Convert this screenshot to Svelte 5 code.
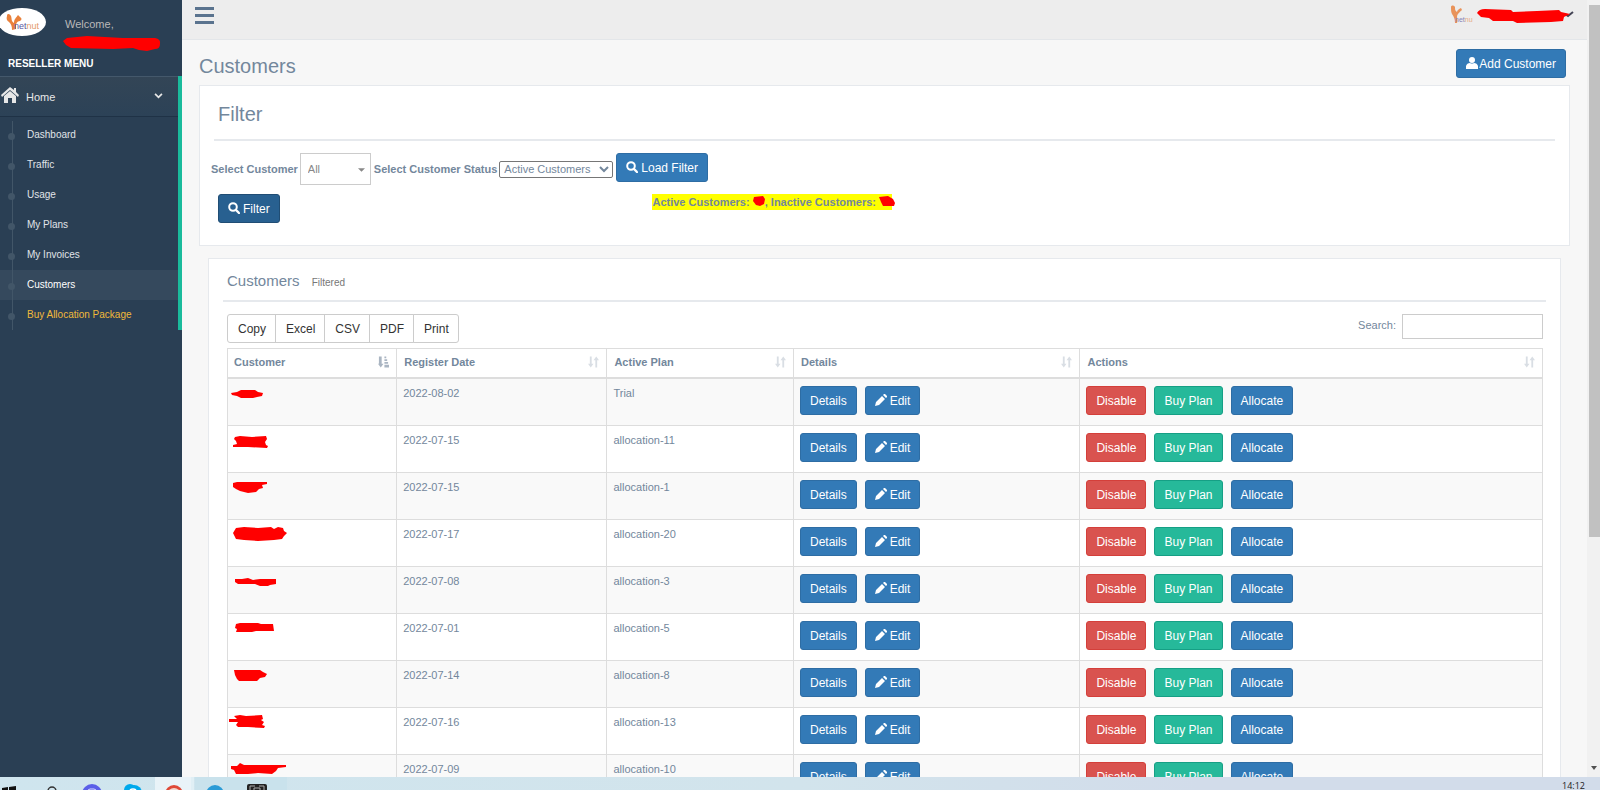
<script lang="ts">
	const menu = [
		{ label: 'Dashboard' },
		{ label: 'Traffic' },
		{ label: 'Usage' },
		{ label: 'My Plans' },
		{ label: 'My Invoices' },
		{ label: 'Customers', current: true },
		{ label: 'Buy Allocation Package', highlight: true }
	];

	const exports = ['Copy', 'Excel', 'CSV', 'PDF', 'Print'];
	const columns = ['Customer', 'Register Date', 'Active Plan', 'Details', 'Actions'];

	// mask = scribble drawn over the customer name
	const rows = [
		{ date: '2022-08-02', plan: 'Trial', mask: 'M3 14 9 13 13 11 27 11 30 13 35 14 34 17 29 18 25 19 13 19 9 17 4 16Z' },
		{ date: '2022-07-15', plan: 'allocation-11', mask: 'M7 11 12 10 24 11 38 10 39 13 37 16 38 19 40 20 39 22 20 21 5 21 5 19 9 18 8 15 6 13Z' },
		{ date: '2022-07-15', plan: 'allocation-1', mask: 'M5 10 9 9 39 9 39 11 34 12 35 15 31 16 28 19 20 20 12 18 8 16 5 14Z' },
		{ date: '2022-07-17', plan: 'allocation-20', mask: 'M5 13 8 8 16 7 30 8 43 7 46 9 50 7 55 8 56 11 59 13 56 16 54 19 46 20 30 21 16 20 8 19Z' },
		{ date: '2022-07-08', plan: 'allocation-3', mask: 'M7 12 14 12 20 11 25 13 32 12 48 12 48 17 42 18 40 19 32 19 27 17 10 17 7 15Z' },
		{ date: '2022-07-01', plan: 'allocation-5', mask: 'M8 10 12 9 30 9 33 10 45 10 46 17 28 17 24 18 8 18 9 15 7 14Z' },
		{ date: '2022-07-14', plan: 'allocation-8', mask: 'M6 9 32 9 35 11 39 13 37 16 32 17 29 20 11 20 9 18 7 14Z' },
		{ date: '2022-07-16', plan: 'allocation-13', mask: 'M6 8 12 7 18 8 34 7 35 11 33 12 36 14 34 17 37 18 36 20 20 19 10 19 8 17 10 14 1 14 1 11 9 11Z' },
		{ date: '2022-07-09', plan: 'allocation-10', mask: 'M3 11 9 11 12 8 16 10 58 10 58 12 50 13 48 16 44 19 30 18 20 19 8 19 6 15 3 14Z' }
	];

	let status = $state('Active Customers');
	let customer = $state('All');
	let search = $state('');
</script>

{#snippet searchIcon()}
	<svg class="icon" viewBox="0 0 12 12" aria-hidden="true">
		<circle cx="5" cy="5" r="3.8" fill="none" stroke="currentColor" stroke-width="2" />
		<path d="m8 8 3 3" stroke="currentColor" stroke-width="2.4" stroke-linecap="round" />
	</svg>
{/snippet}

<div class="screen">
	<div class="window">
		<aside class="sidebar">
			<div class="profile">
				<svg class="brand" viewBox="0 0 46 28" role="img" aria-label="netnut">
					<ellipse cx="22" cy="14" rx="24" ry="14" fill="#fff" />
					<path
						d="M7 8c0-3 3-2 4 0 1 3 0 5 3 7 0-4 2-5 4-8l2 2c2 1 2 3 0 4-3 0-4 3-4 5v3l-4 1c0-4-1-6-3-8-2-1-3-3-2-6Z"
						fill="#e9813c"
					/>
					<text x="14" y="21" font-size="9"><tspan fill="#5b58a0">net</tspan><tspan fill="#e59a6a">nut</tspan></text>
				</svg>
				<div class="welcome">
					<span>Welcome,</span>
					<svg class="name-mask" viewBox="0 0 98 15" aria-hidden="true">
						<path d="M0 5 4 2 14 1 24 0 60 2 92 2Q98 3 97 8 97 13 92 13L84 15 76 14 70 12 50 13 8 12 3 9Z" fill="#f00" />
					</svg>
				</div>
			</div>
			<h3 class="menu-title">RESELLER MENU</h3>
			<nav class="menu">
				<a class="home" href="#home">
					<svg class="home-icon" viewBox="0 0 18 16" aria-hidden="true">
						<path d="M9 0 0 8l1 2 8-7 8 7 1-2-3-3V1h-2v2Z" fill="currentColor" />
						<path d="M9 4 3 9v7h4v-5h4v5h4V9Z" fill="currentColor" />
					</svg>
					<span>Home</span>
					<svg class="chevron" viewBox="0 0 10 7" aria-hidden="true">
						<path d="m1 1 4 4 4-4" fill="none" stroke="currentColor" stroke-width="2" />
					</svg>
				</a>
				<ul class="submenu">
					{#each menu as item}
						<li class:current={item.current}>
							<a href="#menu" class:highlight={item.highlight}>{item.label}</a>
						</li>
					{/each}
				</ul>
			</nav>
		</aside>

		<main class="main">
			<header class="topbar">
				<button class="toggle" aria-label="Toggle menu">
					<span></span><span></span><span></span>
				</button>
				<a class="account" href="#account" aria-label="Account">
					<svg class="account-logo" viewBox="0 0 22 20" aria-hidden="true">
						<path
							d="M0 2c0-2 3-2 4 0 0 2 0 4 2 5 0-2 2-3 4-4l1 2c-2 2-4 3-5 6 0 3 1 4 0 7H4c0-4-1-6-3-9-1-2-1-4-1-7Z"
							fill="#e9935a"
						/>
						<text x="4" y="17" font-size="7"><tspan fill="#8784b8">net</tspan><tspan fill="#e7ab84">nu</tspan></text>
					</svg>
					<svg class="account-mask" viewBox="0 0 98 16" aria-hidden="true">
						<path d="m88 6 3 2 5-4" fill="none" stroke="#445" stroke-width="2" />
						<path d="M0 5Q2 1 8 1L34 2 36 4 60 3 82 2 84 4 93 6 87 9 86 13 74 14 40 15 36 13 16 13 12 10 4 9Z" fill="#f00" />
					</svg>
				</a>
			</header>

			<div class="page">
				<div class="page-head">
					<h1>Customers</h1>
					<button class="btn">
						<svg class="icon" viewBox="0 0 12 12" aria-hidden="true">
							<circle cx="6" cy="3" r="3" fill="currentColor" />
							<path d="M0 12V9q1-3 4-3 2 1 4 0 3 0 4 3v3Z" fill="currentColor" />
						</svg>Add Customer
					</button>
				</div>

				<section class="panel filter">
					<h2>Filter</h2>
					<div class="filter-row">
						<label for="customer">Select Customer</label>
						<span class="picker">
							<select id="customer" bind:value={customer}>
								<option>All</option>
							</select>
							<svg class="caret" viewBox="0 0 8 4" aria-hidden="true"><path d="M0 0h8L4 4Z" fill="#888" /></svg>
						</span>
						<label for="status">Select Customer Status</label>
						<select id="status" class="status" bind:value={status}>
							<option>Active Customers</option>
							<option>Inactive Customers</option>
						</select>
						<button class="btn">{@render searchIcon()} Load Filter</button>
					</div>
					<div class="filter-foot">
						<button class="btn pressed">{@render searchIcon()} Filter</button>
						<strong class="counts">
							Active Customers:
							<svg class="count-mask" viewBox="0 0 12 11" aria-hidden="true">
								<path d="M1 1 10 0 12 3 11 8 7 10 3 9 0 5Z" fill="#f00" />
							</svg>, Inactive Customers:
							<svg class="count-mask wide" viewBox="0 0 16 11" aria-hidden="true">
								<path d="M0 1 9 0 14 3 16 7 15 10 4 10 2 6Z" fill="#f00" />
							</svg>
						</strong>
					</div>
				</section>

				<section class="panel list">
					<h2>Customers <small>Filtered</small></h2>
					<div class="list-body">
						<div class="toolbar">
							<div class="exports">
								{#each exports as name}
									<button>{name}</button>
								{/each}
							</div>
							<label class="search">Search: <input type="search" bind:value={search} /></label>
						</div>
						<table>
							<thead>
								<tr>
									{#each columns as column, i}
										<th scope="col">
											<div class="head-cell">
												{column}
												{#if i === 0}
													<svg class="sort active" viewBox="0 0 12 12" aria-hidden="true">
														<path d="M1 0h3v8h2l-3 4-3-4h1Z M7 0h2v2H7Z M7 3h3v2H7Z M7 6h4v2H7Z M7 9h5v3H7Z" fill="currentColor" />
													</svg>
												{:else}
													<svg class="sort" viewBox="0 0 12 12" aria-hidden="true">
														<path d="M2 0h2v8h2l-3 4-3-4h2Z M8 12h2V4h2L9 0 6 4h2Z" fill="currentColor" />
													</svg>
												{/if}
											</div>
										</th>
									{/each}
								</tr>
							</thead>
							<tbody>
								{#each rows as row}
									<tr>
										<td class="customer">
											<svg viewBox="0 0 70 24" aria-hidden="true"><path d={row.mask} fill="#f00" /></svg>
										</td>
										<td>{row.date}</td>
										<td>{row.plan}</td>
										<td>
											<div class="actions">
												<button class="btn">Details</button>
												<button class="btn">
													<svg class="icon" viewBox="0 0 12 12" aria-hidden="true">
														<path d="m0 12 1-4 6-6 3 3-6 6Z M8 1l1-1h1l2 2v1l-1 1Z" fill="currentColor" />
													</svg>
													Edit
												</button>
											</div>
										</td>
										<td>
											<div class="actions">
												<button class="btn danger">Disable</button>
												<button class="btn success">Buy Plan</button>
												<button class="btn">Allocate</button>
											</div>
										</td>
									</tr>
								{/each}
							</tbody>
						</table>
					</div>
				</section>
			</div>
		</main>

		<div class="scrollbar" aria-hidden="true">
			<div class="thumb"></div>
			<svg class="scroll-arrow" viewBox="0 0 6 4"><path d="M0 0h6L3 4Z" fill="#505050" /></svg>
		</div>
	</div>

	<footer class="taskbar">
		<svg class="tasks" viewBox="0 0 290 13" aria-hidden="true">
			<path d="M155 0h36v13h-36Z" fill="#e9f3f8" />
			<path d="M191 0h3v13h-3Z" fill="#e0eff5" />
			<path d="M195 0h92v13h-92Z" fill="#c9e2ec" />
			<path d="m2 11 6-1v3H2Z M9 10l7-1v4H9Z" fill="#111" />
			<circle cx="52" cy="14" r="4" fill="none" stroke="#333" stroke-width="1.4" />
			<circle cx="92" cy="17" r="10" fill="#5b5fe8" />
			<path d="m88 13 2-1h4l2 1" stroke="#d9daff" fill="none" />
			<circle cx="130" cy="13" r="6" fill="#00a9ec" />
			<circle cx="134" cy="16" r="8" fill="#00a9ec" />
			<path d="M130 13q3-2 6 0" fill="none" stroke="#fff" stroke-width="1.6" />
			<circle cx="174" cy="17" r="9" fill="#df4937" />
			<path d="M169 13q5-4 10 0Z" fill="#f2d7cf" />
			<circle cx="215" cy="17" r="9" fill="#2b9bd6" />
			<rect x="247" y="7" width="20" height="10" rx="2" fill="#222" />
			<path d="M250 13v-4h5 M264 13v-4h-5 M254 13v-2h6v2" fill="none" stroke="#aaa" />
		</svg>
		<time class="clock">14:12</time>
	</footer>
</div>

<style>
	:global(body) {
		margin: 0;
	}

	.screen {
		display: flex;
		flex-direction: column;
		height: 100vh;
		overflow: hidden;
		background: #f7f7f7;
		color: #73879c;
		font-family: 'Liberation Sans', Arial, sans-serif;
		font-size: 11px;
		line-height: 16px;
	}
	.screen * {
		box-sizing: border-box;
	}
	button,
	input,
	select {
		font-family: inherit;
	}
	h1,
	h2,
	h3 {
		margin: 0;
		font-weight: 400;
	}

	.window {
		flex: 1;
		min-height: 0;
		display: flex;
		overflow: hidden;
	}

	/* sidebar */
	.sidebar {
		width: 182px;
		flex-shrink: 0;
		background: #2a3f54;
		color: #e7e7e7;
	}
	.profile {
		display: flex;
		gap: 17px;
		height: 54px;
		padding-top: 8px;
	}
	.brand {
		width: 46px;
		height: 28px;
	}
	.brand text,
	.account-logo text {
		font-family: 'Liberation Sans', Arial, sans-serif;
	}
	.welcome {
		display: flex;
		flex-direction: column;
		gap: 4px;
		padding-top: 8px;
		color: #bab8b8;
	}
	.welcome span {
		padding-left: 2px;
	}
	.name-mask {
		width: 98px;
		height: 15px;
	}
	.menu-title {
		height: 22px;
		padding-left: 8px;
		color: #fff;
		font-size: 10px;
		font-weight: 700;
		line-height: 20px;
	}
	.menu {
		border-right: 4px solid #1abb9c;
	}
	.home {
		display: flex;
		align-items: center;
		height: 41px;
		padding: 0 15px 0 1px;
		border-top: 1px solid #44586b;
		border-bottom: 1px solid #1f3246;
		background: linear-gradient(#334556, #2c4257);
		color: #e7e7e7;
		text-decoration: none;
	}
	.home-icon {
		width: 18px;
		height: 16px;
		margin: 0 7px 3px 0;
	}
	.chevron {
		width: 9px;
		height: 6px;
		margin: 0 0 2px auto;
	}
	.submenu {
		position: relative;
		margin: 0;
		padding: 3px 0 0;
		list-style: none;
	}
	.submenu::before {
		content: '';
		position: absolute;
		left: 12px;
		top: 4px;
		bottom: 0;
		width: 1px;
		background: #425668;
	}
	.submenu li {
		display: flex;
		align-items: center;
		height: 30px;
		padding-left: 8px;
	}
	.submenu li::before {
		content: '';
		width: 7px;
		height: 7px;
		margin: 3px 12px 0 0;
		border-radius: 50%;
		background: #425668;
	}
	.submenu a {
		color: #e0e4e8;
		font-size: 10px;
		text-decoration: none;
	}
	.submenu .current {
		background: #35495d;
	}
	.submenu .current a {
		color: #fff;
	}
	.submenu .highlight {
		color: #f0b93a;
	}

	/* top bar */
	.main {
		flex: 1;
		min-width: 0;
	}
	.topbar {
		display: flex;
		justify-content: space-between;
		height: 40px;
		padding: 5px 12px 0 13px;
		border-bottom: 1px solid #e3e6e9;
		background: #ededed;
	}
	.toggle {
		display: flex;
		flex-direction: column;
		gap: 4px;
		width: 19px;
		height: 21px;
		padding: 2px 0;
		border: 0;
		background: none;
	}
	.toggle span {
		height: 3px;
		flex-shrink: 0;
		background: #5a738e;
	}
	.account {
		display: flex;
		gap: 4px;
	}
	.account-logo {
		width: 22px;
		height: 20px;
	}
	.account-mask {
		width: 98px;
		height: 16px;
		margin-top: 3px;
	}

	/* page */
	.page {
		padding: 9px 17px 0;
	}
	.page-head {
		display: flex;
		justify-content: space-between;
		align-items: center;
		margin-bottom: 7px;
		padding-right: 4px;
	}
	.page-head h1 {
		font-size: 20px;
		line-height: 24px;
		padding-top: 4px;
	}
	.panel {
		border: 1px solid #e6e9ed;
		background: #fff;
	}
	.btn {
		display: inline-flex;
		align-items: center;
		gap: 3px;
		height: 29px;
		padding: 2px 9px 0;
		border: 1px solid #2e6da4;
		border-radius: 3px;
		background: #337ab7;
		color: #fff;
		font-size: 12px;
		line-height: 17px;
		white-space: nowrap;
	}
	.page-head .btn {
		gap: 1px;
	}
	.danger {
		border-color: #d43f3a;
		background: #d9534f;
	}
	.success {
		border-color: #169f85;
		background: #26b99a;
	}
	.pressed {
		border-color: #204d74;
		background: #286090;
	}
	.icon {
		width: 12px;
		height: 12px;
		flex-shrink: 0;
		margin-bottom: 3px;
	}

	.filter {
		height: 161px;
		margin-bottom: 12px;
		padding: 0 11px;
	}
	.filter h2 {
		height: 55px;
		margin: 0 3px;
		padding: 16px 4px 0;
		border-bottom: 2px solid #e6e9ed;
		font-size: 20px;
		line-height: 24px;
	}
	.filter-row {
		display: flex;
		align-items: center;
		gap: 2px;
		margin: 12px 0 9px;
	}
	.filter-row label {
		font-weight: 700;
	}
	.filter-row .btn {
		margin: 0 0 3px 1px;
	}
	.picker {
		position: relative;
		display: flex;
		margin-right: 1px;
	}
	.picker select {
		width: 71px;
		height: 32px;
		padding: 0 7px;
		border: 1px solid #ccc;
		border-radius: 0;
		background: #fff;
		color: #888;
		font-size: 11px;
		appearance: none;
	}
	.caret {
		position: absolute;
		right: 6px;
		top: 15px;
		width: 7px;
		height: 4px;
		pointer-events: none;
	}
	.status {
		width: 114px;
		height: 17px;
		padding: 0;
		border: 1px solid #767676;
		border-radius: 2px;
		background: #fff;
		color: #73879c;
		font-size: 11px;
	}
	.filter-foot {
		display: grid;
		grid-template-columns: 10fr 2fr;
		align-items: start;
	}
	.filter-foot > * {
		grid-area: 1 / 1;
	}
	.filter-foot .btn {
		justify-self: start;
		margin-left: 7px;
	}
	.counts {
		justify-self: center;
		background: #ff0;
	}
	.count-mask {
		width: 12px;
		height: 11px;
		vertical-align: -1px;
	}
	.count-mask.wide {
		width: 16px;
		margin-right: -3px;
	}

	.list {
		margin: 0 9px;
		padding: 0 14px;
	}
	.list h2 {
		height: 43px;
		padding: 12px 4px 0;
		border-bottom: 2px solid #e6e9ed;
		font-size: 15px;
		line-height: 20px;
	}
	.list small {
		margin-left: 8px;
		color: #777;
		font-size: 10px;
	}
	.list-body {
		padding: 12px 3px 0 4px;
	}
	.toolbar {
		display: flex;
		justify-content: space-between;
		align-items: flex-start;
		margin-bottom: 5px;
	}
	.exports {
		display: flex;
	}
	.exports button {
		height: 29px;
		margin-right: -1px;
		padding: 0 9px 0 10px;
		border: 1px solid #ccc;
		background: #fff;
		color: #333;
		font-size: 12px;
	}
	.exports button:first-child {
		border-radius: 3px 0 0 3px;
	}
	.exports button:last-child {
		border-radius: 0 3px 3px 0;
	}
	.search {
		display: flex;
		gap: 6px;
		line-height: 22px;
	}
	.search input {
		width: 141px;
		height: 25px;
		border: 1px solid #ccc;
		border-radius: 0;
		background: #fff;
		font-size: 11px;
	}

	table {
		width: 100%;
		border: 1px solid #ddd;
		border-bottom: 0;
		border-collapse: separate;
		border-spacing: 0;
		table-layout: fixed;
	}
	th,
	td {
		border-left: 1px solid #ddd;
		text-align: left;
		vertical-align: top;
	}
	th:first-child,
	td:first-child {
		border-left: 0;
	}
	th {
		padding: 5px 7px 7px;
		border-bottom: 2px solid #ddd;
	}
	th:first-child {
		padding-left: 6px;
	}
	th:nth-child(1) {
		width: 12.8%;
	}
	th:nth-child(2) {
		width: 16%;
	}
	th:nth-child(3) {
		width: 14.2%;
	}
	th:nth-child(4) {
		width: 21.8%;
	}
	td {
		height: 47px;
		padding: 7px 6px 0;
		border-bottom: 1px solid #ddd;
		line-height: 14px;
	}
	tbody tr:nth-child(odd) {
		background: #f9f9f9;
	}
	.head-cell {
		display: flex;
		justify-content: space-between;
		align-items: center;
		line-height: 16px;
	}
	.sort {
		width: 11px;
		height: 12px;
		color: #d9dee4;
	}
	.sort.active {
		color: #aab5c2;
	}
	.customer {
		padding: 0;
	}
	.customer svg {
		display: block;
		width: 70px;
		height: 24px;
	}
	.actions {
		display: flex;
		gap: 8px;
	}

	/* window chrome */
	.scrollbar {
		display: flex;
		flex-direction: column;
		align-items: flex-end;
		justify-content: space-between;
		width: 13px;
		padding: 5px 0 7px;
		background: #f1f1f1;
	}
	.thumb {
		width: 11px;
		height: 69.5%;
		background: #c1c1c1;
	}
	.scroll-arrow {
		width: 6px;
		height: 4px;
		margin-right: 3px;
	}
	.taskbar {
		display: flex;
		justify-content: space-between;
		flex-shrink: 0;
		height: 13px;
		overflow: hidden;
		background: linear-gradient(90deg, #cfe5ee, #d2e4ec 50%, #d2dcea 75%);
	}
	.tasks {
		width: 290px;
		height: 13px;
	}
	.clock {
		padding: 2px 15px 0 0;
		color: #222;
		font-family: 'Open Sans', sans-serif;
		font-size: 9px;
		line-height: 14px;
	}
</style>
